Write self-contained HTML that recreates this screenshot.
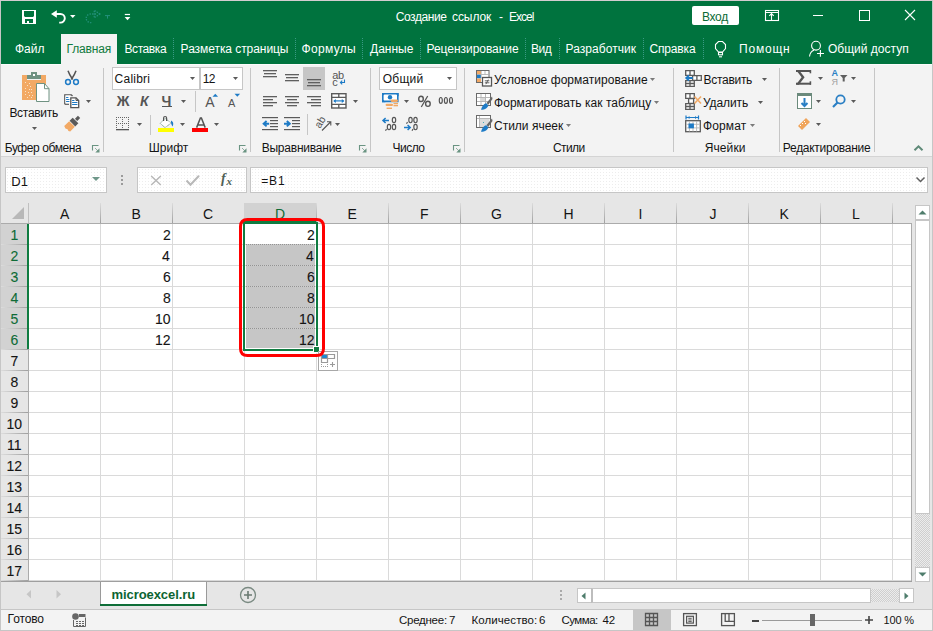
<!DOCTYPE html>
<html><head><meta charset="utf-8"><style>
html,body{margin:0;padding:0;}
body{width:933px;height:631px;overflow:hidden;position:relative;background:#e6e6e6;font-family:"Liberation Sans",sans-serif;}
.t{position:absolute;white-space:pre;font-family:"Liberation Sans",sans-serif;}
.r{position:absolute;}
.s{position:absolute;overflow:visible;}
.dith{background:repeating-conic-gradient(#cfcfcf 0 25%,#ececec 0 50%) 0 0/2px 2px;}
</style></head><body>
<div class="r" style="left:0px;top:0px;width:933px;height:631px;background:#e6e6e6;"></div>
<div class="r" style="left:1px;top:1px;width:931px;height:63px;background:#00733e;"></div>
<div class="r" style="left:61px;top:34px;width:56px;height:30px;background:#f3f3f3;"></div>
<div class="r" style="left:1px;top:64px;width:931px;height:92px;background:#f3f3f3;"></div>
<div class="r" style="left:1px;top:156px;width:931px;height:1px;background:#d4d4d4;"></div>
<div class="r" style="left:1px;top:64px;width:60px;height:1px;background:#fbfbfb;"></div>
<div class="r" style="left:117px;top:64px;width:815px;height:1px;background:#fbfbfb;"></div>
<svg class="s" style="left:22px;top:10px;" width="14" height="14" viewBox="0 0 14 14"><rect x="0" y="0" width="14" height="14" fill="#fff"/><path d="M2 1h10v5l-1 1h-8l-1-1z" fill="#00733e"/><rect x="3" y="9" width="8" height="4" fill="#00733e"/><rect x="5" y="11" width="2" height="2" fill="#fff"/></svg>
<svg class="s" style="left:50px;top:9px;" width="17" height="15" viewBox="0 0 17 15"><path d="M1 5L6.8 1.2V8.8z" fill="#fff"/><path d="M5 5H10.5A4.3 4.3 0 0 1 10.5 13.6H9.2" fill="none" stroke="#fff" stroke-width="1.9"/></svg>
<svg class="s" style="left:70px;top:15px;" width="6" height="4" viewBox="0 0 6 4"><path d="M0 0h5.5l-2.75 3z" fill="#fff"/></svg>
<svg class="s" style="left:85px;top:9px;" width="17" height="15" viewBox="0 0 17 15"><path d="M15 5L9.2 1.2V8.8z" fill="none" stroke="#24917c" stroke-width="1.2" stroke-dasharray="1.5 1"/><path d="M11 5H5.5A4.3 4.3 0 0 0 5.5 13.6H6.8" fill="none" stroke="#24917c" stroke-width="1.3" stroke-dasharray="1.3 1.3"/></svg>
<svg class="s" style="left:105px;top:15px;" width="6" height="4" viewBox="0 0 6 4"><path d="M0 0.6h5M2.5 0.6v3" stroke="#24917c" stroke-width="1"/></svg>
<svg class="s" style="left:124px;top:13px;" width="7" height="8" viewBox="0 0 7 8"><rect x="0.8" y="0.9" width="5.2" height="1.2" fill="#fff"/><path d="M0.6 4h5.8l-2.9 3.2z" fill="#fff"/></svg>
<span class="t" style="left:395.70px;top:11px;font-size:12px;line-height:12px;color:#ffffff;letter-spacing:-0.400px;">Создание</span>
<span class="t" style="left:452.00px;top:11px;font-size:12px;line-height:12px;color:#ffffff;letter-spacing:-0.080px;">ссылок</span>
<span class="t" style="left:499.00px;top:11px;font-size:12px;line-height:12px;color:#ffffff;">-</span>
<span class="t" style="left:509.00px;top:11px;font-size:12px;line-height:12px;color:#ffffff;letter-spacing:-1.000px;">Excel</span>
<div class="r" style="left:692px;top:6px;width:47px;height:19px;background:#fff;border-radius:2px;"></div>
<span class="t" style="left:702.00px;top:11px;font-size:12px;line-height:12px;color:#0b6a35;letter-spacing:-0.333px;">Вход</span>
<svg class="s" style="left:765px;top:10px;" width="14" height="11" viewBox="0 0 14 11"><rect x="0.5" y="0.5" width="13" height="10" fill="none" stroke="#fff" stroke-width="1.1"/><path d="M1 2.5h12" stroke="#fff"/><path d="M6.5 10.5V3.5M4.3 5.8L6.5 3.5l2.2 2.3" fill="none" stroke="#fff" stroke-width="1.1"/></svg>
<div class="r" style="left:813px;top:15px;width:10px;height:1px;background:#fff;"></div>
<svg class="s" style="left:859px;top:10px;" width="11" height="11" viewBox="0 0 11 11"><rect x="0.5" y="0.5" width="10" height="10" fill="none" stroke="#fff"/></svg>
<svg class="s" style="left:904px;top:9px;" width="12" height="12" viewBox="0 0 12 12"><path d="M1 1L11 11M11 1L1 11" stroke="#fff" stroke-width="1.1"/></svg>
<span class="t" style="left:15.00px;top:43px;font-size:12px;line-height:12px;color:#ffffff;">Файл</span>
<span class="t" style="left:66.50px;top:43px;font-size:12px;line-height:12px;color:#107a3c;letter-spacing:-0.167px;">Главная</span>
<span class="t" style="left:124.50px;top:43px;font-size:12px;line-height:12px;color:#ffffff;letter-spacing:-0.417px;">Вставка</span>
<span class="t" style="left:180.60px;top:43px;font-size:12px;line-height:12px;color:#ffffff;letter-spacing:-0.062px;">Разметка страницы</span>
<span class="t" style="left:301.50px;top:43px;font-size:12px;line-height:12px;color:#ffffff;letter-spacing:0.333px;">Формулы</span>
<span class="t" style="left:370.00px;top:43px;font-size:12px;line-height:12px;color:#ffffff;">Данные</span>
<span class="t" style="left:426.50px;top:43px;font-size:12px;line-height:12px;color:#ffffff;letter-spacing:-0.038px;">Рецензирование</span>
<span class="t" style="left:531.00px;top:43px;font-size:12px;line-height:12px;color:#ffffff;letter-spacing:-0.500px;">Вид</span>
<span class="t" style="left:565.50px;top:43px;font-size:12px;line-height:12px;color:#ffffff;letter-spacing:0.050px;">Разработчик</span>
<span class="t" style="left:649.50px;top:43px;font-size:12px;line-height:12px;color:#ffffff;letter-spacing:-0.167px;">Справка</span>
<span class="t" style="left:739.00px;top:43px;font-size:12px;line-height:12px;color:#ffffff;letter-spacing:0.800px;">Помощн</span>
<span class="t" style="left:828.00px;top:43px;font-size:12px;line-height:12px;color:#ffffff;">Общий доступ</span>
<div class="r" style="left:173px;top:38px;width:1px;height:21px;background:repeating-linear-gradient(#3a9a84 0 1px,transparent 1px 2px);"></div>
<div class="r" style="left:295px;top:38px;width:1px;height:21px;background:repeating-linear-gradient(#3a9a84 0 1px,transparent 1px 2px);"></div>
<div class="r" style="left:362px;top:38px;width:1px;height:21px;background:repeating-linear-gradient(#3a9a84 0 1px,transparent 1px 2px);"></div>
<div class="r" style="left:420px;top:38px;width:1px;height:21px;background:repeating-linear-gradient(#3a9a84 0 1px,transparent 1px 2px);"></div>
<div class="r" style="left:525px;top:38px;width:1px;height:21px;background:repeating-linear-gradient(#3a9a84 0 1px,transparent 1px 2px);"></div>
<div class="r" style="left:559px;top:38px;width:1px;height:21px;background:repeating-linear-gradient(#3a9a84 0 1px,transparent 1px 2px);"></div>
<div class="r" style="left:643px;top:38px;width:1px;height:21px;background:repeating-linear-gradient(#3a9a84 0 1px,transparent 1px 2px);"></div>
<div class="r" style="left:703px;top:38px;width:1px;height:21px;background:repeating-linear-gradient(#3a9a84 0 1px,transparent 1px 2px);"></div>
<svg class="s" style="left:714px;top:40px;" width="13" height="18" viewBox="0 0 13 18"><path d="M4.5 1.5H8.5L11.5 4.5V8.5L8.5 12H4.5L1.5 8.5V4.5Z" fill="none" stroke="#fff" stroke-width="1.1"/><rect x="4.5" y="12.5" width="4" height="2.3" fill="none" stroke="#fff" stroke-width="1.1"/><path d="M5 16.8H8" stroke="#fff" stroke-width="1.1"/></svg>
<svg class="s" style="left:808px;top:40px;" width="17" height="18" viewBox="0 0 17 18"><circle cx="8" cy="5.7" r="4.4" fill="none" stroke="#fff" stroke-width="1.1"/><path d="M1.5 16.5C2 13 3.5 11 6 10.3" fill="none" stroke="#fff" stroke-width="1.1"/><path d="M12.4 10v6.7M9 13.5h7" stroke="#fff" stroke-width="1.1"/></svg>
<svg class="s" style="left:22px;top:72px;" width="28" height="30" viewBox="0 0 28 30"><path d="M0 3h5v5h14v-5h5V28H0z" fill="#f2a965"/><rect x="3" y="10" width="1" height="1" fill="#fbe3c6"/><rect x="7" y="11" width="1" height="1" fill="#fbe3c6"/><rect x="5" y="13" width="1" height="1" fill="#fbe3c6"/><rect x="8" y="14" width="1" height="1" fill="#fbe3c6"/><rect x="3" y="16" width="1" height="1" fill="#fbe3c6"/><rect x="7" y="17" width="1" height="1" fill="#fbe3c6"/><rect x="9" y="17" width="1" height="1" fill="#fbe3c6"/><rect x="3" y="19" width="1" height="1" fill="#fbe3c6"/><rect x="6" y="20" width="1" height="1" fill="#fbe3c6"/><rect x="9" y="20" width="1" height="1" fill="#fbe3c6"/><rect x="3" y="22" width="1" height="1" fill="#fbe3c6"/><rect x="7" y="23" width="1" height="1" fill="#fbe3c6"/><rect x="10" y="23" width="1" height="1" fill="#fbe3c6"/><rect x="5" y="25" width="1" height="1" fill="#fbe3c6"/><rect x="9" y="25" width="1" height="1" fill="#fbe3c6"/><rect x="5" y="3" width="14" height="4" fill="#6f9282"/><rect x="9" y="0" width="6" height="3.5" fill="#6f9282"/><rect x="11" y="2" width="2" height="2" fill="#fff"/><path d="M14.5 11.5h8l4.5 5.2V29.5h-12.5z" fill="#fff" stroke="#6f9282"/><path d="M22.5 11.5v5.2h4.5" fill="none" stroke="#6f9282"/></svg>
<span class="t" style="left:9.40px;top:107px;font-size:12px;line-height:12px;color:#141414;letter-spacing:-0.286px;">Вставить</span>
<svg class="s" style="left:32px;top:127px;" width="5" height="3" viewBox="0 0 5 3"><path d="M0 0h5l-2.5 3z" fill="#5a5a5a"/></svg>
<svg class="s" style="left:63px;top:69px;" width="18" height="17" viewBox="0 0 18 17"><path d="M5 1.8C6 5 8 8 9.7 10.5M13 1.8C12 5 10 8 8.3 10.5" fill="none" stroke="#555" stroke-width="1.5"/><circle cx="5" cy="13" r="2.4" fill="none" stroke="#1e7bc6" stroke-width="1.5"/><circle cx="13" cy="13" r="2.4" fill="none" stroke="#1e7bc6" stroke-width="1.5"/></svg>
<svg class="s" style="left:63px;top:93px;" width="17" height="16" viewBox="0 0 17 16"><path d="M1.8 11.2V1.8h6.5l1.2 1.2" fill="none" stroke="#555" stroke-width="1.3"/><path d="M1.8 11.2H6" fill="none" stroke="#555" stroke-width="1.3"/><rect x="2.4" y="2.4" width="5" height="8" fill="#fff"/><path d="M3.5 4.5h1.5M3.5 6.5h2.5M3.5 8.5h2.5" stroke="#1e7bc6" stroke-width="1.1" stroke-linecap="round"/><path d="M7.8 4.8h5.2l2.7 2.7v7.2H7.8z" fill="#fff" stroke="#555" stroke-width="1.3"/><path d="M13 4.8v2.7h2.7" fill="none" stroke="#555" stroke-width="1"/><path d="M9.5 7.5h1.5M9.5 9.5h4.5M9.5 11.5h4.5" stroke="#1e7bc6" stroke-width="1.1" stroke-linecap="round"/></svg>
<svg class="s" style="left:86px;top:100px;" width="5" height="3" viewBox="0 0 5 3"><path d="M0 0h5l-2.5 3z" fill="#5a5a5a"/></svg>
<svg class="s" style="left:62px;top:114px;" width="20" height="20" viewBox="0 0 20 20"><g transform="translate(10 10) rotate(-45)"><rect x="5.8" y="-1.6" width="4.2" height="3.2" fill="#5a5a5a"/><rect x="0.6" y="-4" width="4.4" height="8" fill="#5a5a5a"/><path d="M0 -4V4H-6.5L-7.5 2.5-6.8 0.5-7.8-1.5-7-4z" fill="#f2a965"/></g></svg>
<span class="t" style="left:4.70px;top:142px;font-size:12px;line-height:12px;color:#141414;letter-spacing:-0.409px;">Буфер обмена</span>
<svg class="s" style="left:91px;top:144px;" width="10" height="10" viewBox="0 0 10 10"><path d="M1.5 6.5V1.5H7.5" fill="none" stroke="#6a9482" stroke-width="1.1"/><path d="M4.3 8.5H8.5V4.3z" fill="#6a9482"/><path d="M4 4L7 7" stroke="#6a9482" stroke-width="1" stroke-dasharray="1 0.6"/></svg>
<div class="r" style="left:103px;top:68px;width:1px;height:84px;background:#c6c6c6;"></div>
<div class="r" style="left:112px;top:67px;width:88px;height:23px;background:#fff;border:1px solid #c6c6c6;box-sizing:border-box;"></div>
<div class="r" style="left:200px;top:67px;width:43px;height:23px;background:#fff;border:1px solid #c6c6c6;box-sizing:border-box;"></div>
<span class="t" style="left:114.60px;top:73px;font-size:12px;line-height:12px;color:#141414;letter-spacing:0.233px;">Calibri</span>
<svg class="s" style="left:190px;top:77px;" width="5" height="3" viewBox="0 0 5 3"><path d="M0 0h5l-2.5 3z" fill="#5a5a5a"/></svg>
<span class="t" style="left:202.70px;top:73px;font-size:12px;line-height:12px;color:#141414;letter-spacing:-0.700px;">12</span>
<svg class="s" style="left:233px;top:77px;" width="5" height="3" viewBox="0 0 5 3"><path d="M0 0h5l-2.5 3z" fill="#5a5a5a"/></svg>
<span class="t" style="left:116.70px;top:94px;font-size:14px;line-height:14px;color:#555555;font-weight:bold;">Ж</span>
<span class="t" style="left:139.90px;top:94px;font-size:14px;line-height:14px;color:#555555;font-weight:bold;font-style:italic;">К</span>
<span class="t" style="left:161.60px;top:94px;font-size:14px;line-height:14px;color:#555555;font-weight:bold;">Ч</span>
<div class="r" style="left:162px;top:106px;width:10px;height:1px;background:#555555;"></div>
<svg class="s" style="left:181px;top:100px;" width="5" height="3" viewBox="0 0 5 3"><path d="M0 0h5l-2.5 3z" fill="#5a5a5a"/></svg>
<div class="r" style="left:195px;top:91px;width:1px;height:21px;background:#c6c6c6;"></div>
<span class="t" style="left:205.20px;top:95px;font-size:14px;line-height:14px;color:#555555;">A</span>
<svg class="s" style="left:212px;top:93px;" width="7" height="5" viewBox="0 0 7 5"><path d="M0.5 3.8h5.6L3.3 0.8z" fill="#1e7bc6"/></svg>
<span class="t" style="left:228.00px;top:98px;font-size:11px;line-height:11px;color:#555555;">A</span>
<svg class="s" style="left:234px;top:93px;" width="7" height="5" viewBox="0 0 7 5"><path d="M0.5 0.8h5.6L3.3 3.8z" fill="#1e7bc6"/></svg>
<svg class="s" style="left:115px;top:116px;" width="15" height="15" viewBox="0 0 15 15"><g fill="#666"><rect x="1" y="1" width="1" height="1"/><rect x="1" y="7" width="1" height="1"/><rect x="3" y="1" width="1" height="1"/><rect x="3" y="7" width="1" height="1"/><rect x="5" y="1" width="1" height="1"/><rect x="5" y="7" width="1" height="1"/><rect x="7" y="1" width="1" height="1"/><rect x="7" y="7" width="1" height="1"/><rect x="9" y="1" width="1" height="1"/><rect x="9" y="7" width="1" height="1"/><rect x="11" y="1" width="1" height="1"/><rect x="11" y="7" width="1" height="1"/><rect x="13" y="1" width="1" height="1"/><rect x="13" y="7" width="1" height="1"/><rect x="1" y="3" width="1" height="1"/><rect x="7" y="3" width="1" height="1"/><rect x="13" y="3" width="1" height="1"/><rect x="1" y="5" width="1" height="1"/><rect x="7" y="5" width="1" height="1"/><rect x="13" y="5" width="1" height="1"/><rect x="1" y="9" width="1" height="1"/><rect x="7" y="9" width="1" height="1"/><rect x="13" y="9" width="1" height="1"/><rect x="1" y="11" width="1" height="1"/><rect x="7" y="11" width="1" height="1"/><rect x="13" y="11" width="1" height="1"/></g><rect x="1" y="13" width="13" height="1.3" fill="#555"/></svg>
<svg class="s" style="left:137px;top:123px;" width="5" height="3" viewBox="0 0 5 3"><path d="M0 0h5l-2.5 3z" fill="#5a5a5a"/></svg>
<div class="r" style="left:150px;top:115px;width:1px;height:20px;background:#c6c6c6;"></div>
<svg class="s" style="left:157px;top:115px;" width="18" height="17" viewBox="0 0 18 17"><path d="M3.2 8.4L8 3.4 14.3 8 8 12.6z" fill="#fff" stroke="#5f8a78" stroke-width="0.9" stroke-dasharray="1 0.6"/><path d="M6.6 6V3a1.5 1.5 0 0 1 3 0V6" fill="none" stroke="#555" stroke-width="1.2"/><path d="M14 5.5C16 6.5 17 8.5 15.5 11.5 14.5 10 13.8 8 14 5.5z" fill="#1e7bc6"/><rect x="1" y="13" width="16" height="4" fill="#ffff00"/></svg>
<svg class="s" style="left:180px;top:123px;" width="5" height="3" viewBox="0 0 5 3"><path d="M0 0h5l-2.5 3z" fill="#5a5a5a"/></svg>
<svg class="s" style="left:192px;top:115px;" width="17" height="17" viewBox="0 0 17 17"><path d="M4.6 12.6L8.4 3h1l3.8 9.6M6.2 10h5.6" fill="none" stroke="#555" stroke-width="1.5"/><rect x="0" y="13" width="16" height="4" fill="#ff0000"/></svg>
<svg class="s" style="left:214px;top:123px;" width="5" height="3" viewBox="0 0 5 3"><path d="M0 0h5l-2.5 3z" fill="#5a5a5a"/></svg>
<span class="t" style="left:148.80px;top:142px;font-size:12px;line-height:12px;color:#141414;">Шрифт</span>
<svg class="s" style="left:238px;top:144px;" width="10" height="10" viewBox="0 0 10 10"><path d="M1.5 6.5V1.5H7.5" fill="none" stroke="#6a9482" stroke-width="1.1"/><path d="M4.3 8.5H8.5V4.3z" fill="#6a9482"/><path d="M4 4L7 7" stroke="#6a9482" stroke-width="1" stroke-dasharray="1 0.6"/></svg>
<div class="r" style="left:250px;top:68px;width:1px;height:84px;background:#c6c6c6;"></div>
<svg class="s" style="left:263px;top:70px;" width="14" height="8" viewBox="0 0 14 8"><rect x="0" y="0" width="14" height="1.3" fill="#5f5f5f"/><rect x="1" y="3" width="12" height="1.3" fill="#5f5f5f"/><rect x="0" y="6" width="14" height="1.3" fill="#5f5f5f"/></svg>
<svg class="s" style="left:285px;top:74px;" width="14" height="8" viewBox="0 0 14 8"><rect x="0" y="0" width="14" height="1.3" fill="#5f5f5f"/><rect x="1" y="3" width="12" height="1.3" fill="#5f5f5f"/><rect x="0" y="6" width="14" height="1.3" fill="#5f5f5f"/></svg>
<div class="r" style="left:303px;top:67px;width:22px;height:23px;background:#c6c6c6;"></div>
<svg class="s" style="left:307px;top:79px;" width="14" height="8" viewBox="0 0 14 8"><rect x="0" y="0" width="14" height="1.3" fill="#5f5f5f"/><rect x="1" y="3" width="12" height="1.3" fill="#5f5f5f"/><rect x="0" y="6" width="14" height="1.3" fill="#5f5f5f"/></svg>
<span class="t" style="left:332.3px;top:70px;font-size:11px;line-height:11px;color:#555;letter-spacing:-0.3px">ab</span>
<span class="t" style="left:332.3px;top:77px;font-size:11px;line-height:11px;color:#555;">c</span>
<svg class="s" style="left:339px;top:79px;" width="7" height="6" viewBox="0 0 7 6"><path d="M5.5 0.5v3H1.5M3.2 1.6L1.4 3.5l1.8 1.8" fill="none" stroke="#1e7bc6" stroke-width="1.1"/></svg>
<svg class="s" style="left:263px;top:96px;" width="14" height="11" viewBox="0 0 14 11"><rect x="0" y="0" width="14" height="1.3" fill="#5f5f5f"/><rect x="0" y="3" width="10" height="1.3" fill="#5f5f5f"/><rect x="0" y="6" width="14" height="1.3" fill="#5f5f5f"/><rect x="0" y="9" width="10" height="1.3" fill="#5f5f5f"/></svg>
<svg class="s" style="left:285px;top:96px;" width="14" height="11" viewBox="0 0 14 11"><rect x="0" y="0" width="14" height="1.3" fill="#5f5f5f"/><rect x="2" y="3" width="10" height="1.3" fill="#5f5f5f"/><rect x="0" y="6" width="14" height="1.3" fill="#5f5f5f"/><rect x="2" y="9" width="10" height="1.3" fill="#5f5f5f"/></svg>
<svg class="s" style="left:307px;top:96px;" width="14" height="11" viewBox="0 0 14 11"><rect x="0" y="0" width="14" height="1.3" fill="#5f5f5f"/><rect x="4" y="3" width="10" height="1.3" fill="#5f5f5f"/><rect x="0" y="6" width="14" height="1.3" fill="#5f5f5f"/><rect x="4" y="9" width="10" height="1.3" fill="#5f5f5f"/></svg>
<svg class="s" style="left:331px;top:93px;" width="16" height="16" viewBox="0 0 16 16"><rect x="0.7" y="0.7" width="14.3" height="14.3" fill="#fff" stroke="#5a5a5a" stroke-width="1.4"/><path d="M0.7 4.3h14.3M0.7 11.4h14.3M7.8 0.7v3.6M7.8 11.4v3.6" stroke="#5a5a5a" stroke-width="1.3"/><path d="M3 7.9h9.6" stroke="#1e7bc6" stroke-width="1.2"/><path d="M2.2 7.9l2.6-2v4zM13.4 7.9l-2.6-2v4z" fill="#1e7bc6"/></svg>
<svg class="s" style="left:353px;top:100px;" width="5" height="3" viewBox="0 0 5 3"><path d="M0 0h5l-2.5 3z" fill="#5a5a5a"/></svg>
<svg class="s" style="left:262px;top:117px;" width="16" height="14" viewBox="0 0 16 14"><rect x="0" y="0" width="16" height="1.2" fill="#5a5a5a"/><rect x="8" y="3" width="8" height="1.2" fill="#5a5a5a"/><rect x="8" y="6" width="8" height="1.2" fill="#5a5a5a"/><rect x="8" y="9" width="8" height="1.2" fill="#5a5a5a"/><rect x="0" y="12" width="16" height="1.2" fill="#5a5a5a"/><path d="M1.6 6.7h5.6M4.6 4L1.6 6.7 4.6 9.4" fill="none" stroke="#1e7bc6" stroke-width="1.9"/></svg>
<svg class="s" style="left:284px;top:117px;" width="16" height="14" viewBox="0 0 16 14"><rect x="0" y="0" width="16" height="1.2" fill="#5a5a5a"/><rect x="8" y="3" width="8" height="1.2" fill="#5a5a5a"/><rect x="8" y="6" width="8" height="1.2" fill="#5a5a5a"/><rect x="8" y="9" width="8" height="1.2" fill="#5a5a5a"/><rect x="0" y="12" width="16" height="1.2" fill="#5a5a5a"/><path d="M0 6.7h5.6M2.8 4l3 2.7-3 2.7" fill="none" stroke="#1e7bc6" stroke-width="1.9"/></svg>
<div class="r" style="left:307px;top:114px;width:1px;height:21px;background:#c6c6c6;"></div>
<svg class="s" style="left:312px;top:113px;" width="22" height="20" viewBox="0 0 22 20"><text x="0" y="0" font-family="Liberation Sans" font-size="10.5" fill="#555" transform="translate(8 16) rotate(-58)">ab</text><path d="M10 17.5L18.5 9M15 8.8h3.8v3.8" fill="none" stroke="#555" stroke-width="1.1"/></svg>
<svg class="s" style="left:335px;top:123px;" width="5" height="3" viewBox="0 0 5 3"><path d="M0 0h5l-2.5 3z" fill="#5a5a5a"/></svg>
<span class="t" style="left:261.70px;top:142px;font-size:12px;line-height:12px;color:#141414;letter-spacing:-0.227px;">Выравнивание</span>
<svg class="s" style="left:358px;top:144px;" width="10" height="10" viewBox="0 0 10 10"><path d="M1.5 6.5V1.5H7.5" fill="none" stroke="#6a9482" stroke-width="1.1"/><path d="M4.3 8.5H8.5V4.3z" fill="#6a9482"/><path d="M4 4L7 7" stroke="#6a9482" stroke-width="1" stroke-dasharray="1 0.6"/></svg>
<div class="r" style="left:370px;top:68px;width:1px;height:84px;background:#c6c6c6;"></div>
<div class="r" style="left:379px;top:67px;width:78px;height:23px;background:#fff;border:1px solid #c6c6c6;box-sizing:border-box;"></div>
<span class="t" style="left:382.70px;top:73px;font-size:12px;line-height:12px;color:#141414;letter-spacing:0.250px;">Общий</span>
<svg class="s" style="left:447px;top:77px;" width="5" height="3" viewBox="0 0 5 3"><path d="M0 0h5l-2.5 3z" fill="#5a5a5a"/></svg>
<svg class="s" style="left:378px;top:90px;" width="24" height="22" viewBox="0 0 24 22"><path d="M4.8 3.8h15v7.6h-15z" fill="#fff" stroke="#1e7bc6" stroke-width="1.6"/><path d="M4 3h3.5L4 6.5zM20.6 3h-3.5l3.5 3.5zM4 12.2h3.5L4 8.7z" fill="#1e7bc6"/><circle cx="12" cy="7.2" r="2.2" fill="#1e7bc6"/><rect x="12.6" y="9.6" width="7.4" height="2.3" rx="1.1" fill="#f2a965"/><rect x="15.5" y="12.8" width="4.5" height="1.4" fill="#f2a965"/><rect x="15.5" y="14.9" width="4.5" height="1.4" fill="#f2a965"/><rect x="7.6" y="13.8" width="7.4" height="2.3" rx="1.1" fill="#f2a965"/><rect x="8.6" y="17.6" width="5.4" height="1.4" fill="#f2a965"/></svg>
<svg class="s" style="left:404px;top:100px;" width="5" height="3" viewBox="0 0 5 3"><path d="M0 0h5l-2.5 3z" fill="#5a5a5a"/></svg>
<svg class="s" style="left:417px;top:95px;" width="15" height="13" viewBox="0 0 15 13"><ellipse cx="4" cy="3.9" rx="2.3" ry="2.6" fill="none" stroke="#555" stroke-width="1.4"/><ellipse cx="10.9" cy="8.8" rx="2.3" ry="2.6" fill="none" stroke="#555" stroke-width="1.4"/><path d="M4.3 12L10.7 1" stroke="#555" stroke-width="1.3"/></svg>
<svg class="s" style="left:437px;top:95px;" width="18" height="11" viewBox="0 0 18 11"><g fill="none" stroke="#555" stroke-width="1.2"><ellipse cx="3.8" cy="5.4" rx="1.5" ry="2.9"/><ellipse cx="8.9" cy="5.4" rx="1.5" ry="2.9"/><ellipse cx="14" cy="5.4" rx="1.5" ry="2.9"/></g></svg>
<svg class="s" style="left:378px;top:112px;" width="44" height="22" viewBox="0 0 44 22"><g fill="none" stroke="#555" stroke-width="1.15"><ellipse cx="16" cy="8" rx="1.7" ry="2.7"/><ellipse cx="11" cy="15" rx="1.7" ry="2.7"/><ellipse cx="16" cy="15" rx="1.7" ry="2.7"/><path d="M8.5 17L7.5 18.8"/><ellipse cx="32.5" cy="8" rx="1.7" ry="2.7"/><ellipse cx="37.5" cy="8" rx="1.7" ry="2.7"/><path d="M29.5 10L28.5 11.8"/><ellipse cx="37.5" cy="15" rx="1.7" ry="2.7"/><path d="M35 17L34 18.8"/></g><path d="M5 8.5h6M7.6 6L5 8.5 7.6 11" fill="none" stroke="#1e7bc6" stroke-width="1.5"/><path d="M26 15.5h6.2M29.6 13l2.6 2.5-2.6 2.5" fill="none" stroke="#1e7bc6" stroke-width="1.5"/></svg>
<span class="t" style="left:392.50px;top:142px;font-size:12px;line-height:12px;color:#141414;letter-spacing:-0.500px;">Число</span>
<svg class="s" style="left:452px;top:144px;" width="10" height="10" viewBox="0 0 10 10"><path d="M1.5 6.5V1.5H7.5" fill="none" stroke="#6a9482" stroke-width="1.1"/><path d="M4.3 8.5H8.5V4.3z" fill="#6a9482"/><path d="M4 4L7 7" stroke="#6a9482" stroke-width="1" stroke-dasharray="1 0.6"/></svg>
<div class="r" style="left:464px;top:68px;width:1px;height:84px;background:#c6c6c6;"></div>
<svg class="s" style="left:475px;top:70px;" width="18" height="17" viewBox="0 0 18 17"><rect x="1.5" y="0.5" width="12.5" height="12" fill="#fff" stroke="#6a6a6a"/><rect x="2" y="1" width="4" height="3.5" fill="#f2a965"/><rect x="2" y="4.6" width="4" height="3.8" fill="#1e7bc6"/><rect x="2" y="8.5" width="4" height="3.5" fill="#f2a965"/><path d="M6.2 1v7.5M10 1v3.5M6.2 4.5h7.5" stroke="#aaa" stroke-width="0.8"/><rect x="7.5" y="7.5" width="9" height="8.5" fill="#fff" stroke="#555" stroke-width="1.3"/><path d="M9.8 10.8h4.6M9.8 12.8h4.6M13.3 9.6l-2.4 4.6" stroke="#555" stroke-width="0.9"/></svg>
<span class="t" style="left:494.00px;top:74px;font-size:12px;line-height:12px;color:#141414;letter-spacing:0.045px;">Условное форматирование</span>
<svg class="s" style="left:650px;top:78px;" width="5" height="3" viewBox="0 0 5 3"><path d="M0 0h5l-2.5 3z" fill="#7a7a7a"/></svg>
<svg class="s" style="left:475px;top:92px;" width="19" height="19" viewBox="0 0 19 19"><rect x="1.5" y="1.5" width="14" height="12" fill="#fff" stroke="#6a6a6a"/><path d="M2 5.5h13M2 9.5h13M6 2v11M10.5 2v11" stroke="#b0b0b0" stroke-width="0.9"/><rect x="6.5" y="6" width="3.5" height="3" fill="#d8d8d8"/><path d="M17 4.5L11.5 11l1.8 1.8L17.5 7z" fill="#666"/><path d="M11.3 11.2l2 2c-.5 2.5-3 4.5-7.3 4.5 1-3 2.5-6 5.3-6.5z" fill="#1e7bc6"/></svg>
<span class="t" style="left:494.00px;top:97px;font-size:12px;line-height:12px;color:#141414;letter-spacing:0.042px;">Форматировать как таблицу</span>
<svg class="s" style="left:654px;top:101px;" width="5" height="3" viewBox="0 0 5 3"><path d="M0 0h5l-2.5 3z" fill="#7a7a7a"/></svg>
<svg class="s" style="left:475px;top:114px;" width="19" height="19" viewBox="0 0 19 19"><rect x="1.5" y="1.5" width="14" height="12" fill="#fff" stroke="#6a6a6a"/><path d="M2 4.5h13M4.5 2v11" stroke="#b0b0b0" stroke-width="0.9"/><rect x="5" y="5" width="9.5" height="8" fill="#dcdcdc"/><rect x="8" y="8" width="1" height="1" fill="#4ab"/><path d="M17 4.5L11.5 11l1.8 1.8L17.5 7z" fill="#666"/><path d="M11.3 11.2l2 2c-.5 2.5-3 4.5-7.3 4.5 1-3 2.5-6 5.3-6.5z" fill="#1e7bc6"/></svg>
<span class="t" style="left:494.00px;top:120px;font-size:12px;line-height:12px;color:#141414;">Стили ячеек</span>
<svg class="s" style="left:566px;top:124px;" width="5" height="3" viewBox="0 0 5 3"><path d="M0 0h5l-2.5 3z" fill="#7a7a7a"/></svg>
<span class="t" style="left:553.00px;top:142px;font-size:12px;line-height:12px;color:#141414;letter-spacing:-0.600px;">Стили</span>
<div class="r" style="left:673px;top:68px;width:1px;height:84px;background:#c6c6c6;"></div>
<svg class="s" style="left:684px;top:69px;" width="19" height="18" viewBox="0 0 19 18"><g fill="#fff" stroke="#5a5a5a" stroke-width="1.3"><path d="M1.7 1.7h8.6v4.6H1.7zM6 1.7v4.6"/><path d="M1.7 11.7h8.6v5.6H1.7zM1.7 14.5h8.6M6 11.7v5.6"/><path d="M8.6 6.6h8.7v4.8H8.6zM12.9 6.6v4.8"/></g><path d="M2.2 9h6.5M5 6.3L2.2 9 5 11.7" fill="none" stroke="#1e7bc6" stroke-width="1.8"/></svg>
<span class="t" style="left:703.50px;top:74px;font-size:12px;line-height:12px;color:#141414;letter-spacing:-0.286px;">Вставить</span>
<svg class="s" style="left:762px;top:78px;" width="5" height="3" viewBox="0 0 5 3"><path d="M0 0h5l-2.5 3z" fill="#5a5a5a"/></svg>
<svg class="s" style="left:684px;top:92px;" width="19" height="18" viewBox="0 0 19 18"><g fill="#fff" stroke="#5a5a5a" stroke-width="1.3"><path d="M1.7 1.7h8.6v4.6H1.7zM6 1.7v4.6"/><path d="M1.7 11.7h8.6v5.6H1.7zM1.7 14.5h8.6M6 11.7v5.6"/><path d="M4.6 6.6h5v4.8h-5z"/></g><path d="M10.5 4.5l6.5 7M17 4.5l-6.5 7" stroke="#f2a965" stroke-width="1.6"/></svg>
<span class="t" style="left:703.00px;top:97px;font-size:12px;line-height:12px;color:#141414;letter-spacing:-0.100px;">Удалить</span>
<svg class="s" style="left:758px;top:101px;" width="5" height="3" viewBox="0 0 5 3"><path d="M0 0h5l-2.5 3z" fill="#5a5a5a"/></svg>
<svg class="s" style="left:684px;top:115px;" width="18" height="18" viewBox="0 0 18 18"><path d="M2 2.5h12.5M2 0.5v4M14.5 0.5v4" stroke="#1e7bc6" stroke-width="1.2"/><path d="M3.5 2.5l2-1.5v3zM13 2.5l-2-1.5v3z" fill="#1e7bc6"/><rect x="1.7" y="5.7" width="14.6" height="11" fill="#fff" stroke="#5a5a5a" stroke-width="1.3"/><path d="M2 9.3h14M2 12.9h14M5.4 6v10.5M9 6v10.5M12.6 6v10.5" stroke="#b5b5b5" stroke-width="0.9"/><rect x="4.5" y="8.5" width="5.4" height="4.8" fill="#1e7bc6"/></svg>
<span class="t" style="left:703.00px;top:120px;font-size:12px;line-height:12px;color:#141414;letter-spacing:0.120px;">Формат</span>
<svg class="s" style="left:750px;top:124px;" width="5" height="3" viewBox="0 0 5 3"><path d="M0 0h5l-2.5 3z" fill="#7a7a7a"/></svg>
<span class="t" style="left:704.70px;top:142px;font-size:12px;line-height:12px;color:#141414;letter-spacing:0.100px;">Ячейки</span>
<div class="r" style="left:779px;top:68px;width:1px;height:84px;background:#c6c6c6;"></div>
<svg class="s" style="left:796px;top:70px;" width="16" height="16" viewBox="0 0 16 16"><g fill="#555"><rect x="0" y="0" width="15" height="2"/><rect x="13.6" y="0" width="1.6" height="3.3"/><rect x="0" y="12.7" width="15" height="2"/><rect x="13.6" y="11.3" width="1.6" height="3.4"/><path d="M0 0H2.9L8.6 7.35 2.9 14.7H0L5.6 7.35z"/></g></svg>
<svg class="s" style="left:818px;top:77px;" width="5" height="3" viewBox="0 0 5 3"><path d="M0 0h5l-2.5 3z" fill="#5a5a5a"/></svg>
<span class="t" style="left:831.5px;top:69px;font-size:9px;line-height:9px;color:#2a7fc4;font-weight:bold">A</span>
<span class="t" style="left:831.5px;top:78px;font-size:9px;line-height:9px;color:#a0a0a0;">Я</span>
<svg class="s" style="left:840px;top:75px;" width="8" height="7" viewBox="0 0 8 7"><path d="M0 0h7.5l-2.8 3v3.5h-2v-3.5z" fill="#5f5f5f"/></svg>
<svg class="s" style="left:851px;top:77px;" width="5" height="3" viewBox="0 0 5 3"><path d="M0 0h5l-2.5 3z" fill="#5a5a5a"/></svg>
<svg class="s" style="left:797px;top:93px;" width="15" height="16" viewBox="0 0 15 16"><rect x="0.5" y="0.5" width="14" height="15" fill="#fff" stroke="#6b8a7c"/><rect x="1" y="1" width="13" height="2" fill="#6b8a7c"/><path d="M7.5 5v8M4.5 10l3 3 3-3" fill="none" stroke="#2a7fc4" stroke-width="2"/></svg>
<svg class="s" style="left:816px;top:100px;" width="5" height="3" viewBox="0 0 5 3"><path d="M0 0h5l-2.5 3z" fill="#5a5a5a"/></svg>
<svg class="s" style="left:832px;top:94px;" width="14" height="14" viewBox="0 0 14 14"><circle cx="8.5" cy="5.5" r="4.2" fill="none" stroke="#2a7fc4" stroke-width="1.8"/><path d="M5.5 8.5L1 13" stroke="#2a7fc4" stroke-width="2.2"/></svg>
<svg class="s" style="left:851px;top:100px;" width="5" height="3" viewBox="0 0 5 3"><path d="M0 0h5l-2.5 3z" fill="#5a5a5a"/></svg>
<svg class="s" style="left:797px;top:117px;" width="14" height="13" viewBox="0 0 14 13"><path d="M1 9l8-8 4 4-8 8z" fill="#f0a45a"/><path d="M3 8l1 1M5 6l1 1M7 4l1 1M9 6l-1 1" stroke="#fff"/></svg>
<svg class="s" style="left:816px;top:123px;" width="5" height="3" viewBox="0 0 5 3"><path d="M0 0h5l-2.5 3z" fill="#5a5a5a"/></svg>
<span class="t" style="left:782.80px;top:142px;font-size:12px;line-height:12px;color:#141414;letter-spacing:-0.277px;">Редактирование</span>
<div class="r" style="left:874px;top:68px;width:1px;height:84px;background:#c6c6c6;"></div>
<svg class="s" style="left:913px;top:144px;" width="11" height="8" viewBox="0 0 11 8"><path d="M1.5 6.3l4-4 4 4" fill="none" stroke="#5f8a78" stroke-width="2"/></svg>
<div class="r" style="left:5px;top:167px;width:102px;height:26px;background:#fff;border:1px solid #c6c6c6;box-sizing:border-box;background-image:radial-gradient(circle at 1.5px 1.5px,#ededed 0.6px,transparent 0.8px);background-size:3px 3px;"></div>
<span class="t" style="left:11.30px;top:175px;font-size:13px;line-height:13px;color:#141414;">D1</span>
<svg class="s" style="left:92px;top:177px;" width="9" height="5" viewBox="0 0 9 5"><path d="M0 0h8l-4 4z" fill="#6f978a"/></svg>
<div class="r" style="left:121px;top:175px;width:2px;height:2px;background:#9a9a9a;"></div>
<div class="r" style="left:121px;top:179px;width:2px;height:2px;background:#9a9a9a;"></div>
<div class="r" style="left:121px;top:183px;width:2px;height:2px;background:#9a9a9a;"></div>
<div class="r" style="left:137px;top:167px;width:110px;height:26px;background:#fff;border:1px solid #c6c6c6;box-sizing:border-box;background-image:radial-gradient(circle at 1.5px 1.5px,#ededed 0.6px,transparent 0.8px);background-size:3px 3px;"></div>
<svg class="s" style="left:150px;top:175px;" width="12" height="11" viewBox="0 0 12 11"><path d="M1.2 1l9.6 9M10.8 1L1.2 10" stroke="#b8b8b8" stroke-width="1.5"/></svg>
<svg class="s" style="left:185px;top:174px;" width="15" height="12" viewBox="0 0 15 12"><path d="M1.5 6.5l4 4.2 8.5-9" fill="none" stroke="#b8b8b8" stroke-width="2"/></svg>
<span class="t" style="left:221px;top:172px;font-family:'Liberation Serif';font-style:italic;font-weight:bold;font-size:14px;line-height:14px;color:#4f5f57;">f</span>
<span class="t" style="left:226.5px;top:176px;font-family:'Liberation Serif';font-style:italic;font-weight:bold;font-size:11px;line-height:11px;color:#4f5f57;">x</span>
<div class="r" style="left:250px;top:167px;width:678px;height:26px;background:#fff;border:1px solid #c6c6c6;box-sizing:border-box;background-image:radial-gradient(circle at 1.5px 1.5px,#ededed 0.6px,transparent 0.8px);background-size:3px 3px;"></div>
<span class="t" style="left:261.20px;top:175px;font-size:12px;line-height:12px;color:#141414;letter-spacing:0.900px;">=B1</span>
<svg class="s" style="left:916px;top:177px;" width="9" height="6" viewBox="0 0 9 6"><path d="M0.5 0.5l4 4 4-4" fill="none" stroke="#5f5f5f" stroke-width="1.5"/></svg>
<div class="r" style="left:28px;top:224px;width:884px;height:357px;background:#fff;"></div>
<div class="r" style="left:1px;top:203px;width:911px;height:20px;background:#e6e6e6;"></div>
<div class="r" style="left:1px;top:223px;width:911px;height:1px;background:#ababab;"></div>
<div class="r" style="left:1px;top:224px;width:27px;height:357px;background:#e6e6e6;"></div>
<div class="r" style="left:100px;top:224px;width:1px;height:357px;background:#dadada;"></div>
<div class="r" style="left:100px;top:203px;width:1px;height:20px;background:linear-gradient(rgba(160,160,160,0.15),#a0a0a0);"></div>
<div class="r" style="left:172px;top:224px;width:1px;height:357px;background:#dadada;"></div>
<div class="r" style="left:172px;top:203px;width:1px;height:20px;background:linear-gradient(rgba(160,160,160,0.15),#a0a0a0);"></div>
<div class="r" style="left:244px;top:224px;width:1px;height:357px;background:#dadada;"></div>
<div class="r" style="left:244px;top:203px;width:1px;height:20px;background:linear-gradient(rgba(160,160,160,0.15),#a0a0a0);"></div>
<div class="r" style="left:316px;top:224px;width:1px;height:357px;background:#dadada;"></div>
<div class="r" style="left:316px;top:203px;width:1px;height:20px;background:linear-gradient(rgba(160,160,160,0.15),#a0a0a0);"></div>
<div class="r" style="left:388px;top:224px;width:1px;height:357px;background:#dadada;"></div>
<div class="r" style="left:388px;top:203px;width:1px;height:20px;background:linear-gradient(rgba(160,160,160,0.15),#a0a0a0);"></div>
<div class="r" style="left:460px;top:224px;width:1px;height:357px;background:#dadada;"></div>
<div class="r" style="left:460px;top:203px;width:1px;height:20px;background:linear-gradient(rgba(160,160,160,0.15),#a0a0a0);"></div>
<div class="r" style="left:532px;top:224px;width:1px;height:357px;background:#dadada;"></div>
<div class="r" style="left:532px;top:203px;width:1px;height:20px;background:linear-gradient(rgba(160,160,160,0.15),#a0a0a0);"></div>
<div class="r" style="left:604px;top:224px;width:1px;height:357px;background:#dadada;"></div>
<div class="r" style="left:604px;top:203px;width:1px;height:20px;background:linear-gradient(rgba(160,160,160,0.15),#a0a0a0);"></div>
<div class="r" style="left:676px;top:224px;width:1px;height:357px;background:#dadada;"></div>
<div class="r" style="left:676px;top:203px;width:1px;height:20px;background:linear-gradient(rgba(160,160,160,0.15),#a0a0a0);"></div>
<div class="r" style="left:748px;top:224px;width:1px;height:357px;background:#dadada;"></div>
<div class="r" style="left:748px;top:203px;width:1px;height:20px;background:linear-gradient(rgba(160,160,160,0.15),#a0a0a0);"></div>
<div class="r" style="left:820px;top:224px;width:1px;height:357px;background:#dadada;"></div>
<div class="r" style="left:820px;top:203px;width:1px;height:20px;background:linear-gradient(rgba(160,160,160,0.15),#a0a0a0);"></div>
<div class="r" style="left:892px;top:224px;width:1px;height:357px;background:#dadada;"></div>
<div class="r" style="left:892px;top:203px;width:1px;height:20px;background:linear-gradient(rgba(160,160,160,0.15),#a0a0a0);"></div>
<div class="r" style="left:28px;top:244px;width:884px;height:1px;background:#dadada;"></div>
<div class="r" style="left:1px;top:244px;width:27px;height:1px;background:linear-gradient(90deg,#dcdcdc,#c8c8c8 35%,#9f9f9f);"></div>
<div class="r" style="left:28px;top:265px;width:884px;height:1px;background:#dadada;"></div>
<div class="r" style="left:1px;top:265px;width:27px;height:1px;background:linear-gradient(90deg,#dcdcdc,#c8c8c8 35%,#9f9f9f);"></div>
<div class="r" style="left:28px;top:286px;width:884px;height:1px;background:#dadada;"></div>
<div class="r" style="left:1px;top:286px;width:27px;height:1px;background:linear-gradient(90deg,#dcdcdc,#c8c8c8 35%,#9f9f9f);"></div>
<div class="r" style="left:28px;top:307px;width:884px;height:1px;background:#dadada;"></div>
<div class="r" style="left:1px;top:307px;width:27px;height:1px;background:linear-gradient(90deg,#dcdcdc,#c8c8c8 35%,#9f9f9f);"></div>
<div class="r" style="left:28px;top:328px;width:884px;height:1px;background:#dadada;"></div>
<div class="r" style="left:1px;top:328px;width:27px;height:1px;background:linear-gradient(90deg,#dcdcdc,#c8c8c8 35%,#9f9f9f);"></div>
<div class="r" style="left:28px;top:349px;width:884px;height:1px;background:#dadada;"></div>
<div class="r" style="left:1px;top:349px;width:27px;height:1px;background:linear-gradient(90deg,#dcdcdc,#c8c8c8 35%,#9f9f9f);"></div>
<div class="r" style="left:28px;top:370px;width:884px;height:1px;background:#dadada;"></div>
<div class="r" style="left:1px;top:370px;width:27px;height:1px;background:linear-gradient(90deg,#dcdcdc,#c8c8c8 35%,#9f9f9f);"></div>
<div class="r" style="left:28px;top:391px;width:884px;height:1px;background:#dadada;"></div>
<div class="r" style="left:1px;top:391px;width:27px;height:1px;background:linear-gradient(90deg,#dcdcdc,#c8c8c8 35%,#9f9f9f);"></div>
<div class="r" style="left:28px;top:412px;width:884px;height:1px;background:#dadada;"></div>
<div class="r" style="left:1px;top:412px;width:27px;height:1px;background:linear-gradient(90deg,#dcdcdc,#c8c8c8 35%,#9f9f9f);"></div>
<div class="r" style="left:28px;top:433px;width:884px;height:1px;background:#dadada;"></div>
<div class="r" style="left:1px;top:433px;width:27px;height:1px;background:linear-gradient(90deg,#dcdcdc,#c8c8c8 35%,#9f9f9f);"></div>
<div class="r" style="left:28px;top:454px;width:884px;height:1px;background:#dadada;"></div>
<div class="r" style="left:1px;top:454px;width:27px;height:1px;background:linear-gradient(90deg,#dcdcdc,#c8c8c8 35%,#9f9f9f);"></div>
<div class="r" style="left:28px;top:475px;width:884px;height:1px;background:#dadada;"></div>
<div class="r" style="left:1px;top:475px;width:27px;height:1px;background:linear-gradient(90deg,#dcdcdc,#c8c8c8 35%,#9f9f9f);"></div>
<div class="r" style="left:28px;top:496px;width:884px;height:1px;background:#dadada;"></div>
<div class="r" style="left:1px;top:496px;width:27px;height:1px;background:linear-gradient(90deg,#dcdcdc,#c8c8c8 35%,#9f9f9f);"></div>
<div class="r" style="left:28px;top:517px;width:884px;height:1px;background:#dadada;"></div>
<div class="r" style="left:1px;top:517px;width:27px;height:1px;background:linear-gradient(90deg,#dcdcdc,#c8c8c8 35%,#9f9f9f);"></div>
<div class="r" style="left:28px;top:538px;width:884px;height:1px;background:#dadada;"></div>
<div class="r" style="left:1px;top:538px;width:27px;height:1px;background:linear-gradient(90deg,#dcdcdc,#c8c8c8 35%,#9f9f9f);"></div>
<div class="r" style="left:28px;top:559px;width:884px;height:1px;background:#dadada;"></div>
<div class="r" style="left:1px;top:559px;width:27px;height:1px;background:linear-gradient(90deg,#dcdcdc,#c8c8c8 35%,#9f9f9f);"></div>
<div class="r" style="left:28px;top:580px;width:884px;height:1px;background:#dadada;"></div>
<div class="r" style="left:1px;top:580px;width:27px;height:1px;background:linear-gradient(90deg,#dcdcdc,#c8c8c8 35%,#9f9f9f);"></div>
<div class="r" style="left:28px;top:203px;width:1px;height:20px;background:#c0c0c0;"></div>
<div class="r" style="left:28px;top:224px;width:1px;height:357px;background:#ababab;"></div>
<div class="r" style="left:911px;top:223px;width:1px;height:359px;background:#ababab;"></div>
<div class="r" style="left:1px;top:581px;width:911px;height:1px;background:#9f9f9f;"></div>
<svg class="s" style="left:12px;top:207px;" width="13" height="13" viewBox="0 0 13 13"><path d="M12 0v12H0z" fill="#b8b8b8"/></svg>
<div class="r" style="left:244px;top:203px;width:72px;height:20px;background:#d2d2d2;"></div>
<div class="r" style="left:244px;top:221px;width:72px;height:2px;background:#107c41;"></div>
<div class="r" style="left:1px;top:224px;width:27px;height:125px;background:#d2d2d2;"></div>
<div class="r" style="left:1px;top:244px;width:27px;height:1px;background:linear-gradient(90deg,#dcdcdc,#c8c8c8 35%,#9f9f9f);"></div>
<div class="r" style="left:1px;top:265px;width:27px;height:1px;background:linear-gradient(90deg,#dcdcdc,#c8c8c8 35%,#9f9f9f);"></div>
<div class="r" style="left:1px;top:286px;width:27px;height:1px;background:linear-gradient(90deg,#dcdcdc,#c8c8c8 35%,#9f9f9f);"></div>
<div class="r" style="left:1px;top:307px;width:27px;height:1px;background:linear-gradient(90deg,#dcdcdc,#c8c8c8 35%,#9f9f9f);"></div>
<div class="r" style="left:1px;top:328px;width:27px;height:1px;background:linear-gradient(90deg,#dcdcdc,#c8c8c8 35%,#9f9f9f);"></div>
<div class="r" style="left:1px;top:349px;width:27px;height:1px;background:linear-gradient(90deg,#dcdcdc,#c8c8c8 35%,#9f9f9f);"></div>
<div class="r" style="left:27px;top:224px;width:2px;height:125px;background:#107c41;"></div>
<span class="t" style="left:60.00px;top:207px;font-size:14px;line-height:14px;color:#141414;">A</span>
<span class="t" style="left:131.50px;top:207px;font-size:14px;line-height:14px;color:#141414;">B</span>
<span class="t" style="left:203.00px;top:207px;font-size:14px;line-height:14px;color:#141414;">C</span>
<span class="t" style="left:275.00px;top:207px;font-size:14px;line-height:14px;color:#0e6b36;">D</span>
<span class="t" style="left:347.50px;top:207px;font-size:14px;line-height:14px;color:#141414;">E</span>
<span class="t" style="left:420.00px;top:207px;font-size:14px;line-height:14px;color:#141414;">F</span>
<span class="t" style="left:491.00px;top:207px;font-size:14px;line-height:14px;color:#141414;">G</span>
<span class="t" style="left:563.50px;top:207px;font-size:14px;line-height:14px;color:#141414;">H</span>
<span class="t" style="left:638.50px;top:207px;font-size:14px;line-height:14px;color:#141414;">I</span>
<span class="t" style="left:709.50px;top:207px;font-size:14px;line-height:14px;color:#141414;">J</span>
<span class="t" style="left:779.50px;top:207px;font-size:14px;line-height:14px;color:#141414;">K</span>
<span class="t" style="left:852.00px;top:207px;font-size:14px;line-height:14px;color:#141414;">L</span>
<span class="t" style="left:10.50px;top:228px;font-size:14px;line-height:14px;color:#0e6b36;-webkit-text-stroke:0.1px #0e6b36;">1</span>
<span class="t" style="left:10.50px;top:249px;font-size:14px;line-height:14px;color:#0e6b36;-webkit-text-stroke:0.1px #0e6b36;">2</span>
<span class="t" style="left:10.50px;top:270px;font-size:14px;line-height:14px;color:#0e6b36;-webkit-text-stroke:0.1px #0e6b36;">3</span>
<span class="t" style="left:10.50px;top:291px;font-size:14px;line-height:14px;color:#0e6b36;-webkit-text-stroke:0.1px #0e6b36;">4</span>
<span class="t" style="left:10.50px;top:312px;font-size:14px;line-height:14px;color:#0e6b36;-webkit-text-stroke:0.1px #0e6b36;">5</span>
<span class="t" style="left:10.50px;top:333px;font-size:14px;line-height:14px;color:#0e6b36;-webkit-text-stroke:0.1px #0e6b36;">6</span>
<span class="t" style="left:10.50px;top:354px;font-size:14px;line-height:14px;color:#141414;-webkit-text-stroke:0.1px #141414;">7</span>
<span class="t" style="left:10.50px;top:375px;font-size:14px;line-height:14px;color:#141414;-webkit-text-stroke:0.1px #141414;">8</span>
<span class="t" style="left:10.50px;top:396px;font-size:14px;line-height:14px;color:#141414;-webkit-text-stroke:0.1px #141414;">9</span>
<span class="t" style="left:6.50px;top:417px;font-size:14px;line-height:14px;color:#141414;-webkit-text-stroke:0.1px #141414;">10</span>
<span class="t" style="left:7.00px;top:438px;font-size:14px;line-height:14px;color:#141414;-webkit-text-stroke:0.1px #141414;">11</span>
<span class="t" style="left:6.50px;top:459px;font-size:14px;line-height:14px;color:#141414;-webkit-text-stroke:0.1px #141414;">12</span>
<span class="t" style="left:6.50px;top:480px;font-size:14px;line-height:14px;color:#141414;-webkit-text-stroke:0.1px #141414;">13</span>
<span class="t" style="left:6.50px;top:501px;font-size:14px;line-height:14px;color:#141414;-webkit-text-stroke:0.1px #141414;">14</span>
<span class="t" style="left:6.50px;top:522px;font-size:14px;line-height:14px;color:#141414;-webkit-text-stroke:0.1px #141414;">15</span>
<span class="t" style="left:6.50px;top:543px;font-size:14px;line-height:14px;color:#141414;-webkit-text-stroke:0.1px #141414;">16</span>
<span class="t" style="left:6.50px;top:564px;font-size:14px;line-height:14px;color:#141414;-webkit-text-stroke:0.1px #141414;">17</span>
<div class="r" style="left:246px;top:245px;width:69px;height:103px;background:#c6c6c6;"></div>
<div class="r" style="left:246px;top:244px;width:69px;height:1px;background:repeating-linear-gradient(90deg,#939393 0 1px,#cdcdcd 1px 2px);"></div>
<div class="r" style="left:246px;top:265px;width:69px;height:1px;background:repeating-linear-gradient(90deg,#939393 0 1px,#cdcdcd 1px 2px);"></div>
<div class="r" style="left:246px;top:286px;width:69px;height:1px;background:repeating-linear-gradient(90deg,#939393 0 1px,#cdcdcd 1px 2px);"></div>
<div class="r" style="left:246px;top:307px;width:69px;height:1px;background:repeating-linear-gradient(90deg,#939393 0 1px,#cdcdcd 1px 2px);"></div>
<div class="r" style="left:246px;top:328px;width:69px;height:1px;background:repeating-linear-gradient(90deg,#939393 0 1px,#cdcdcd 1px 2px);"></div>
<div class="r" style="left:243px;top:222px;width:75px;height:129px;background:transparent;border:2px solid #107c41;box-sizing:border-box;"></div>
<div class="r" style="left:313px;top:346px;width:5px;height:5px;background:#107c41;border:1px solid #fff;box-sizing:content-box;"></div>
<span class="t" style="left:163.00px;top:228px;font-size:14px;line-height:14px;color:#141414;-webkit-text-stroke:0.1px #141414;">2</span>
<span class="t" style="left:307.00px;top:228px;font-size:14px;line-height:14px;color:#141414;-webkit-text-stroke:0.1px #141414;">2</span>
<span class="t" style="left:162.00px;top:249px;font-size:14px;line-height:14px;color:#141414;-webkit-text-stroke:0.1px #141414;">4</span>
<span class="t" style="left:306.00px;top:249px;font-size:14px;line-height:14px;color:#141414;-webkit-text-stroke:0.1px #141414;">4</span>
<span class="t" style="left:163.00px;top:270px;font-size:14px;line-height:14px;color:#141414;-webkit-text-stroke:0.1px #141414;">6</span>
<span class="t" style="left:307.00px;top:270px;font-size:14px;line-height:14px;color:#141414;-webkit-text-stroke:0.1px #141414;">6</span>
<span class="t" style="left:163.00px;top:291px;font-size:14px;line-height:14px;color:#141414;-webkit-text-stroke:0.1px #141414;">8</span>
<span class="t" style="left:307.00px;top:291px;font-size:14px;line-height:14px;color:#141414;-webkit-text-stroke:0.1px #141414;">8</span>
<span class="t" style="left:155.00px;top:312px;font-size:14px;line-height:14px;color:#141414;-webkit-text-stroke:0.1px #141414;">10</span>
<span class="t" style="left:299.00px;top:312px;font-size:14px;line-height:14px;color:#141414;-webkit-text-stroke:0.1px #141414;">10</span>
<span class="t" style="left:155.00px;top:333px;font-size:14px;line-height:14px;color:#141414;-webkit-text-stroke:0.1px #141414;">12</span>
<span class="t" style="left:299.00px;top:333px;font-size:14px;line-height:14px;color:#141414;-webkit-text-stroke:0.1px #141414;">12</span>
<div class="r" style="left:318px;top:351px;width:20px;height:20px;background:#fff;border:1px solid #a8a8a8;box-sizing:border-box;"></div>
<svg class="s" style="left:318px;top:351px;" width="20" height="20" viewBox="0 0 20 20"><rect x="3.5" y="3.5" width="6" height="4" fill="#1e88d0"/><path d="M3.5 3.5h13v4h-7v4h-6z" fill="none" stroke="#9a9a9a" stroke-width="1.2"/><path d="M9.5 3.5v4M3.5 7.5h6" stroke="#9a9a9a" stroke-width="1.2"/><g fill="#9a9a9a"><rect x="3" y="13" width="1" height="1"/><rect x="9" y="13" width="1" height="1"/><rect x="3" y="15" width="1" height="1"/><rect x="5" y="15" width="1" height="1"/><rect x="7" y="15" width="1" height="1"/><rect x="9" y="15" width="1" height="1"/></g><path d="M12 13.5h5M14.5 11v5" stroke="#9a9a9a" stroke-width="1.1"/></svg>
<svg class="s" style="left:236px;top:214px;" width="92" height="146" viewBox="0 0 92 146"><path d="M11.5 5.5H80.5Q87.5 5.5 87.5 12.5V134.5Q87.5 141.5 80.5 141.5H11.5Q4.5 141.5 4.5 134.5V12.5Q4.5 5.5 11.5 5.5Z" fill="none" stroke="#ff0000" stroke-width="3"/></svg>
<div class="r" style="left:913px;top:203px;width:19px;height:378px;background:#e6e6e6;"></div>
<div class="r dith" style="left:915px;top:513px;width:15px;height:54px;"></div>
<div class="r" style="left:915px;top:205px;width:15px;height:15px;background:#fff;border:1px solid #c6c6c6;box-sizing:border-box;"></div>
<svg class="s" style="left:918px;top:210px;" width="9" height="5" viewBox="0 0 9 5"><path d="M0.5 4.5l4-4 4 4z" fill="#4f7d6c"/></svg>
<div class="r" style="left:915px;top:220px;width:15px;height:294px;background:#fff;border:1px solid #c6c6c6;box-sizing:border-box;"></div>
<div class="r" style="left:915px;top:567px;width:15px;height:15px;background:#fff;border:1px solid #c6c6c6;box-sizing:border-box;"></div>
<svg class="s" style="left:918px;top:572px;" width="9" height="5" viewBox="0 0 9 5"><path d="M0.5 0.5h8l-4 4z" fill="#4f7d6c"/></svg>
<div class="r" style="left:1px;top:582px;width:931px;height:27px;background:#e6e6e6;"></div>
<div class="r" style="left:1px;top:609px;width:931px;height:1px;background:#c6c6c6;"></div>
<svg class="s" style="left:26px;top:590px;" width="6" height="9" viewBox="0 0 6 9"><path d="M5 0v8.5L0.5 4.25z" fill="#c6c6c6"/></svg>
<svg class="s" style="left:56px;top:590px;" width="6" height="9" viewBox="0 0 6 9"><path d="M0.5 0v8.5L5 4.25z" fill="#c6c6c6"/></svg>
<div class="r" style="left:100px;top:582px;width:107px;height:24px;background:#fff;border:1px solid #9a9a9a;border-top:none;box-sizing:border-box;"></div>
<div class="r" style="left:100px;top:604px;width:107px;height:2px;background:#0f6e38;"></div>
<span class="t" style="left:111.60px;top:588px;font-size:13px;line-height:13px;color:#0c6432;font-weight:bold;letter-spacing:-0.083px;">microexcel.ru</span>
<svg class="s" style="left:239px;top:586px;" width="18" height="18" viewBox="0 0 18 18"><circle cx="9" cy="9" r="7.5" fill="none" stroke="#7a8a82" stroke-width="1.3"/><path d="M9 5v8M5 9h8" stroke="#6a7a72" stroke-width="1.6"/></svg>
<div class="r" style="left:560px;top:590px;width:2px;height:2px;background:#aaaaaa;"></div>
<div class="r" style="left:560px;top:594px;width:2px;height:2px;background:#aaaaaa;"></div>
<div class="r" style="left:560px;top:598px;width:2px;height:2px;background:#aaaaaa;"></div>
<div class="r" style="left:577px;top:588px;width:15px;height:15px;background:#fff;border:1px solid #c6c6c6;box-sizing:border-box;"></div>
<svg class="s" style="left:581px;top:592px;" width="5" height="8" viewBox="0 0 5 8"><path d="M4.5 0.5v7L0.5 4z" fill="#4f7d6c"/></svg>
<div class="r" style="left:591px;top:588px;width:280px;height:15px;background:#fff;border:1px solid #c6c6c6;border-left:2px solid #bdbdbd;box-sizing:border-box;"></div>
<div class="r dith" style="left:871px;top:589px;width:28px;height:13px;"></div>
<div class="r" style="left:899px;top:588px;width:15px;height:15px;background:#fff;border:1px solid #c6c6c6;box-sizing:border-box;"></div>
<svg class="s" style="left:904px;top:592px;" width="5" height="8" viewBox="0 0 5 8"><path d="M0.5 0.5v7L4.5 4z" fill="#4f7d6c"/></svg>
<div class="r" style="left:1px;top:610px;width:931px;height:20px;background:#f3f3f3;"></div>
<span class="t" style="left:7.60px;top:613px;font-size:12px;line-height:12px;color:#141414;letter-spacing:-0.120px;">Готово</span>
<svg class="s" style="left:72px;top:613px;" width="14" height="14" viewBox="0 0 14 14"><circle cx="3.5" cy="3.5" r="3.3" fill="#666"/><rect x="7" y="1" width="6.5" height="3" fill="#666"/><path d="M1.5 7v6.5h12v-9" fill="none" stroke="#666"/><path d="M4 8.5h2M7 8.5h2M10 8.5h2M4 10.5h2M7 10.5h2M10 10.5h2M4 12.5h2M7 12.5h2M10 12.5h2" stroke="#666"/></svg>
<span class="t" style="left:399.00px;top:615px;font-size:11.5px;line-height:11.5px;color:#141414;letter-spacing:-0.257px;">Среднее:</span>
<span class="t" style="left:449.00px;top:615px;font-size:11.5px;line-height:11.5px;color:#141414;">7</span>
<span class="t" style="left:471.50px;top:615px;font-size:11.5px;line-height:11.5px;color:#141414;letter-spacing:0.080px;">Количество:</span>
<span class="t" style="left:539.00px;top:615px;font-size:11.5px;line-height:11.5px;color:#141414;">6</span>
<span class="t" style="left:561.40px;top:615px;font-size:11.5px;line-height:11.5px;color:#141414;letter-spacing:-0.480px;">Сумма:</span>
<span class="t" style="left:602.40px;top:615px;font-size:11.5px;line-height:11.5px;color:#141414;">42</span>
<div class="r" style="left:633px;top:610px;width:38px;height:20px;background:#c6c6c6;"></div>
<svg class="s" style="left:644px;top:612px;" width="15" height="15" viewBox="0 0 15 15"><path d="M1.5 1.5h12v12h-12zM5.5 1.5v12M9.5 1.5v12M1.5 5.5h12M1.5 9.5h12" fill="none" stroke="#555" stroke-width="1.3"/></svg>
<svg class="s" style="left:682px;top:612px;" width="16" height="15" viewBox="0 0 16 15"><rect x="1.6" y="1.6" width="12.8" height="12" fill="none" stroke="#555" stroke-width="1.3"/><rect x="4.6" y="4.3" width="6.8" height="6.8" fill="none" stroke="#555" stroke-width="1.2"/><path d="M6.3 6.3h3.4M6.3 8h3.4M6.3 9.6h3.4" stroke="#555"/></svg>
<svg class="s" style="left:720px;top:612px;" width="16" height="15" viewBox="0 0 16 15"><rect x="1.6" y="1.6" width="12.8" height="12" fill="none" stroke="#555" stroke-width="1.3"/><path d="M5.2 1.6V9.3H14.4M9 1.6V9.3" fill="none" stroke="#555" stroke-width="1.3"/></svg>
<div class="r" style="left:752px;top:620px;width:7px;height:2px;background:#444;"></div>
<div class="r" style="left:762px;top:620px;width:100px;height:1px;background:#9a9a9a;"></div>
<div class="r" style="left:810px;top:614px;width:5px;height:12px;background:#666;"></div>
<svg class="s" style="left:865px;top:616px;" width="8" height="8" viewBox="0 0 8 8"><path d="M4 0v8M0 4h8" stroke="#444" stroke-width="1.6"/></svg>
<span class="t" style="left:883.50px;top:615px;font-size:11px;line-height:11px;color:#141414;letter-spacing:-0.175px;">100 %</span>
<div class="r" style="left:0px;top:630px;width:933px;height:1px;background:#c6c6c6;"></div>
<div class="r" style="left:0px;top:0px;width:1px;height:631px;background:#c6c6c6;"></div>
<div class="r" style="left:932px;top:0px;width:1px;height:631px;background:#c6c6c6;"></div>
<div class="r" style="left:0px;top:0px;width:933px;height:1px;background:#d3cdd0;"></div>
</body></html>
